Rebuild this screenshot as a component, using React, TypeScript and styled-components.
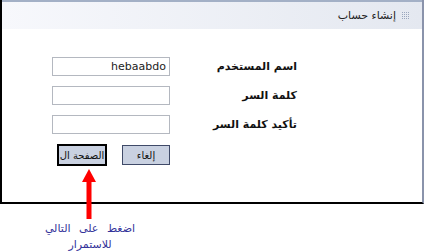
import styled, { createGlobalStyle } from "styled-components";

const Global = createGlobalStyle`
    body {
        margin: 0;
        background: #fff;
        font-family: "DejaVu Sans", Tahoma, sans-serif;
    }
`

const fields = [
    { label: "اسم المستخدم", value: "hebaabdo" },
    { label: "كلمة السر", value: "" },
    { label: "تأكيد كلمة السر", value: "" },
]

function Grip() {
    const dots = []
    for (let r = 0; r < 4; r++) {
        for (let c = 0; c < 4; c++) {
            dots.push(<rect key={r + "-" + c} x={c * 2} y={r * 2} width="1" height="1" fill="#9aa6bd" />)
        }
    }
    return <svg width="8" height="8" viewBox="0 0 8 8">{dots}</svg>
}

function App() {
    return (
        <Page>
            <Global />
            <Frame>
                <Header>
                    <Grip />
                    <Title>إنشاء حساب</Title>
                </Header>
                <Form>
                    {fields.map((f) => (
                        <Row key={f.label}>
                            <Label>{f.label}</Label>
                            <Input defaultValue={f.value} dir="ltr" />
                        </Row>
                    ))}
                    <Row>
                        <span />
                        <Buttons>
                            <Button>إلغاء</Button>
                            <Button $primary>الصفحة ال</Button>
                        </Buttons>
                    </Row>
                </Form>
            </Frame>
            <Note>
                <Arrow width="16" height="50" viewBox="0 0 16 50">
                    <polygon points="8,0 15,13 1,13" fill="#ff0000" />
                    <rect x="5.5" y="12" width="5" height="38" fill="#ff0000" />
                </Arrow>
                <NoteText>اضغط على التالي</NoteText>
                <NoteText>للاستمرار</NoteText>
            </Note>
        </Page>
    )
}

export default App

const Page = styled.div`
    width: 426px;
    height: 251px;
    position: relative;
    overflow: hidden;
`

const Frame = styled.div`
    width: 420px;
    height: 202px;
    border-left: 2px solid #000;
    border-right: 2px solid #8a93ab;
    border-bottom: 2px solid #000;
`

const Header = styled.div`
    height: 27px;
    border-top: 2px solid #a3b0c6;
    background: linear-gradient(to right, #f7f8fc, #e4e8f0);
    display: flex;
    justify-content: flex-start;
    align-items: center;
    gap: 6px;
    padding-right: 12px;
    direction: rtl;
`

const Title = styled.span`
    font-size: 11px;
    color: #222;
`

const Form = styled.div`
    direction: rtl;
    padding: 28px 125px 0 0;
    display: flex;
    flex-direction: column;
    gap: 10px;
`

const Row = styled.div`
    display: grid;
    grid-template-columns: 112px 118px;
    column-gap: 15px;
    align-items: center;
`

const Label = styled.label`
    font-size: 11px;
    font-weight: bold;
    color: #111;
`

const Input = styled.input`
    box-sizing: border-box;
    width: 118px;
    height: 19px;
    border: 1px solid #b4b8c0;
    font-family: "DejaVu Sans", Tahoma, sans-serif;
    font-size: 11px;
    padding: 0 3px;
    text-align: right;
    color: #222;
    outline: none;
`

const Buttons = styled.div`
    display: flex;
    align-items: center;
    gap: 15px;
`

const Button = styled.button<{ $primary?: boolean }>`
    box-sizing: border-box;
    width: ${(p) => (p.$primary ? "50px" : "48px")};
    height: ${(p) => (p.$primary ? "22px" : "20px")};
    background: #c9d1e1;
    border: ${(p) => (p.$primary ? "2px solid #000" : "1px solid #3f4a68")};
    font-family: "DejaVu Sans", Tahoma, sans-serif;
    font-size: 10px;
    color: #111;
    padding: 0;
`

const Note = styled.div`
    width: 100px;
    margin-left: 40px;
    display: flex;
    flex-direction: column;
    align-items: center;
    padding-top: 17px;
`

const Arrow = styled.svg`
    position: absolute;
    left: 81px;
    top: 169px;
`

const NoteText = styled.div`
    font-size: 11px;
    color: #33339a;
    letter-spacing: 2px;
    word-spacing: 5px;
    line-height: 16px;
    white-space: nowrap;
`
